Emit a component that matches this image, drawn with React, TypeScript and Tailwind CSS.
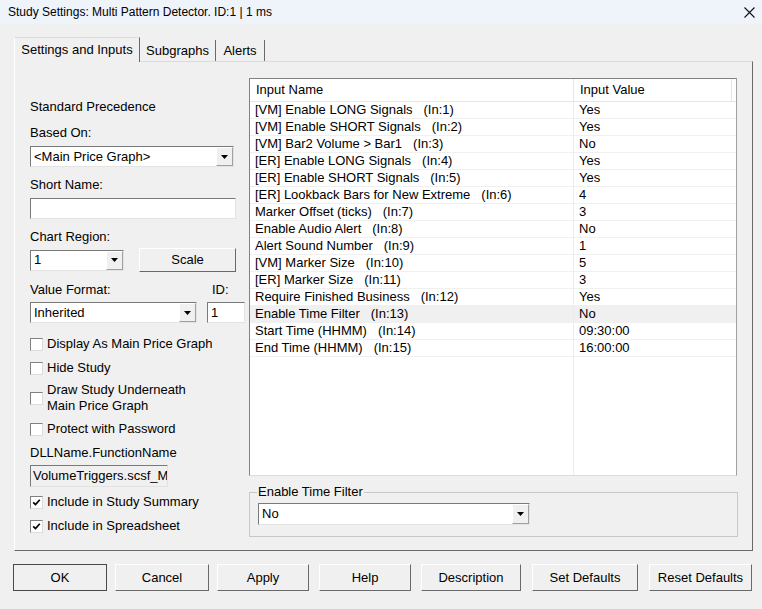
import React from 'react';

// Input rows shown in the grid
const INPUTS = [
  { name: '[VM] Enable LONG Signals', idx: 1, value: 'Yes' },
  { name: '[VM] Enable SHORT Signals', idx: 2, value: 'Yes' },
  { name: '[VM] Bar2 Volume > Bar1', idx: 3, value: 'No' },
  { name: '[ER] Enable LONG Signals', idx: 4, value: 'Yes' },
  { name: '[ER] Enable SHORT Signals', idx: 5, value: 'Yes' },
  { name: '[ER] Lookback Bars for New Extreme', idx: 6, value: '4' },
  { name: 'Marker Offset (ticks)', idx: 7, value: '3' },
  { name: 'Enable Audio Alert', idx: 8, value: 'No' },
  { name: 'Alert Sound Number', idx: 9, value: '1' },
  { name: '[VM] Marker Size', idx: 10, value: '5' },
  { name: '[ER] Marker Size', idx: 11, value: '3' },
  { name: 'Require Finished Business', idx: 12, value: 'Yes' },
  { name: 'Enable Time Filter', idx: 13, value: 'No', selected: true },
  { name: 'Start Time (HHMM)', idx: 14, value: '09:30:00' },
  { name: 'End Time (HHMM)', idx: 15, value: '16:00:00' },
];

const BUTTONS = [
  { label: 'OK', cls: 'w-[94px] ml-0', primary: true },
  { label: 'Cancel', cls: 'w-[94px] ml-[8px]' },
  { label: 'Apply', cls: 'w-[92px] ml-[8px]' },
  { label: 'Help', cls: 'w-[92px] ml-[10px]' },
  { label: 'Description', cls: 'w-[100px] ml-[10px]' },
  { label: 'Set Defaults', cls: 'w-[106px] ml-[11px]' },
  { label: 'Reset Defaults', cls: 'w-[103px] ml-[11px]' },
];

const Arrow = () => (
  <div className="w-[17px] h-full flex items-center justify-center bg-[#f0f0f0] border-t border-l border-t-[#ffffff] border-l-[#ffffff] border-r border-b border-r-[#a0a0a0] border-b-[#a0a0a0]">
    <svg width="7" height="4" viewBox="0 0 7 4">
      <path d="M0 0 H7 L3.5 4 Z" fill="#000" />
    </svg>
  </div>
);

const Select: React.FC<{ value: string; className: string }> = ({ value, className }) => (
  <div
    className={`${className} flex items-stretch bg-white border border-t-[#7a7a7a] border-l-[#7a7a7a] border-r-[#e3e3e3] border-b-[#e3e3e3]`}
  >
    <div className="flex-1 pl-[3px] flex items-center leading-[16px] whitespace-nowrap overflow-hidden">{value}</div>
    <Arrow />
  </div>
);

const Check: React.FC<{ checked?: boolean }> = ({ checked }) => (
  <div className="w-[13px] h-[13px] shrink-0 bg-white border border-t-[#808080] border-l-[#808080] border-r-[#dcdcdc] border-b-[#dcdcdc] flex items-center justify-center">
    {checked && (
      <svg width="9" height="9" viewBox="0 0 9 9">
        <path d="M1.2 4.3 L3.5 6.6 L7.8 1.8" stroke="#000" strokeWidth="1.7" fill="none" />
      </svg>
    )}
  </div>
);

const CheckRow: React.FC<{ label: React.ReactNode; checked?: boolean; className: string }> = ({
  label,
  checked,
  className,
}) => (
  <div className={`${className} flex items-center`}>
    <Check checked={checked} />
    <div className="ml-[4px] leading-[16px]">{label}</div>
  </div>
);

export default function App() {
  return (
    <div
      className="w-[762px] h-[609px] bg-[#f0f0f0] text-black text-[13px] flex flex-col overflow-hidden"
      style={{ fontFamily: '"Liberation Sans", Arial, sans-serif' }}
    >
      {/* Title bar */}
      <div className="h-[24px] bg-[#eff3fa] flex items-center justify-between pl-[8px] pr-[7px] text-[12px]">
        <span>Study Settings: Multi Pattern Detector. ID:1 | 1 ms</span>
        <svg width="11" height="11" viewBox="0 0 11 11">
          <path d="M0.5 0.5 L10.5 10.5 M10.5 0.5 L0.5 10.5" stroke="#111" strokeWidth="1.1" />
        </svg>
      </div>

      {/* Tabs */}
      <div className="mt-[13px] pl-[14px] h-[24px] flex items-end">
        <div className="h-[25px] w-[126px] -mb-px z-10 bg-[#f0f0f0] border-t border-l border-t-[#dcdcdc] border-l-[#ffffff] border-r border-r-[#696969] flex items-center justify-center pb-[1px]">
          Settings and Inputs
        </div>
        <div className="h-[21px] w-[76px] border-r border-r-[#696969] flex items-center justify-center">Subgraphs</div>
        <div className="h-[21px] w-[49px] border-r border-r-[#696969] flex items-center justify-center">Alerts</div>
      </div>

      {/* Tab panel */}
      <div className="ml-[14px] w-[739px] h-[490px] border border-t-[#dcdcdc] border-l-[#ffffff] border-r-[#696969] border-b-[#696969] flex pl-[15px]">
        {/* Left column */}
        <div className="w-[219px] flex flex-col pt-[37px]">
          <div className="leading-[16px]">Standard Precedence</div>
          <div className="leading-[16px] mt-[10px]">Based On:</div>
          <Select value="<Main Price Graph>" className="mt-[5px] w-[204px] h-[21px]" />
          <div className="leading-[16px] mt-[10px]">Short Name:</div>
          <div className="mt-[5px] w-[206px] h-[21px] bg-white border border-t-[#7a7a7a] border-l-[#7a7a7a] border-r-[#e3e3e3] border-b-[#e3e3e3]" />
          <div className="leading-[16px] mt-[10px]">Chart Region:</div>
          <div className="mt-[3px] h-[24px] flex items-center">
            <Select value="1" className="w-[94px] h-[21px]" />
            <div className="ml-[15px] w-[97px] h-[24px] bg-[#f0f0f0] border border-t-[#ffffff] border-l-[#ffffff] border-r-[#696969] border-b-[#696969] flex items-center justify-center">
              Scale
            </div>
          </div>
          <div className="mt-[10px] flex leading-[16px]">
            <div className="w-[182px]">Value Format:</div>
            <div>ID:</div>
          </div>
          <div className="mt-[4px] h-[21px] flex">
            <Select value="Inherited" className="w-[167px] h-[21px]" />
            <div className="ml-[10px] w-[38px] h-[21px] bg-white border border-t-[#7a7a7a] border-l-[#7a7a7a] border-r-[#e3e3e3] border-b-[#e3e3e3] pl-[3px] flex items-center">
              1
            </div>
          </div>
          <CheckRow className="mt-[13px]" label="Display As Main Price Graph" />
          <CheckRow className="mt-[8px]" label="Hide Study" />
          <CheckRow
            className="mt-[6px]"
            label={
              <>
                Draw Study Underneath
                <br />
                Main Price Graph
              </>
            }
          />
          <CheckRow className="mt-[7px]" label="Protect with Password" />
          <div className="leading-[16px] mt-[8px]">DLLName.FunctionName</div>
          <div className="mt-[4px] w-[138px] h-[22px] bg-[#f0f0f0] border border-t-[#7a7a7a] border-l-[#7a7a7a] border-r-[#e3e3e3] border-b-[#e3e3e3] pl-[2px] flex items-center overflow-hidden whitespace-nowrap">
            VolumeTriggers.scsf_MultiPatternDetector
          </div>
          <CheckRow className="mt-[7px]" checked label="Include in Study Summary" />
          <CheckRow className="mt-[8px]" checked label="Include in Spreadsheet" />
        </div>

        {/* Right column */}
        <div className="w-[489px] flex flex-col pt-[16px]">
          <div className="w-[488px] h-[398px] bg-white border border-t-[#828282] border-l-[#828282] border-r-[#a0a0a0] border-b-[#dcdcdc] flex flex-col">
            <div className="h-[23px] flex border-b border-[#e5e5e5] shrink-0">
              <div className="w-[324px] border-r border-[#e5e5e5] pl-[6px] flex items-center">Input Name</div>
              <div className="w-[158px] border-r border-[#e5e5e5] pl-[6px] flex items-center">Input Value</div>
            </div>
            {INPUTS.map(row => (
              <div
                key={row.idx}
                className={`h-[17px] flex border-b border-[#f0f0f0] shrink-0 ${row.selected ? 'bg-[#f0f0f0]' : ''}`}
              >
                <div className="w-[324px] border-r border-[#ececec] pl-[5px] flex items-center whitespace-nowrap">
                  {row.name}
                  <span className="ml-[11px]">(In:{row.idx})</span>
                </div>
                <div className="w-[161px] pl-[5px] flex items-center">{row.value}</div>
              </div>
            ))}
            <div className="flex-1 flex">
              <div className="w-[324px] border-r border-[#ececec]" />
            </div>
          </div>

          <fieldset className="mt-[8px] w-[489px] border border-[#c8c8c8] px-[8px] pb-[11px]">
            <legend className="leading-[16px] px-[1px] -ml-[1px]">Enable Time Filter</legend>
            <Select value="No" className="mt-[3px] w-[272px] h-[22px]" />
          </fieldset>
        </div>
      </div>

      {/* Dialog buttons */}
      <div className="mt-[13px] pl-[13px] flex">
        {BUTTONS.map(b => (
          <div
            key={b.label}
            className={`${b.cls} h-[27px] bg-[#f0f0f0] flex items-center justify-center border ${
              b.primary
                ? 'border-[#4a4a4a]'
                : 'border-t-[#ffffff] border-l-[#ffffff] border-r-[#696969] border-b-[#696969]'
            }`}
          >
            {b.label}
          </div>
        ))}
      </div>
    </div>
  );
}
